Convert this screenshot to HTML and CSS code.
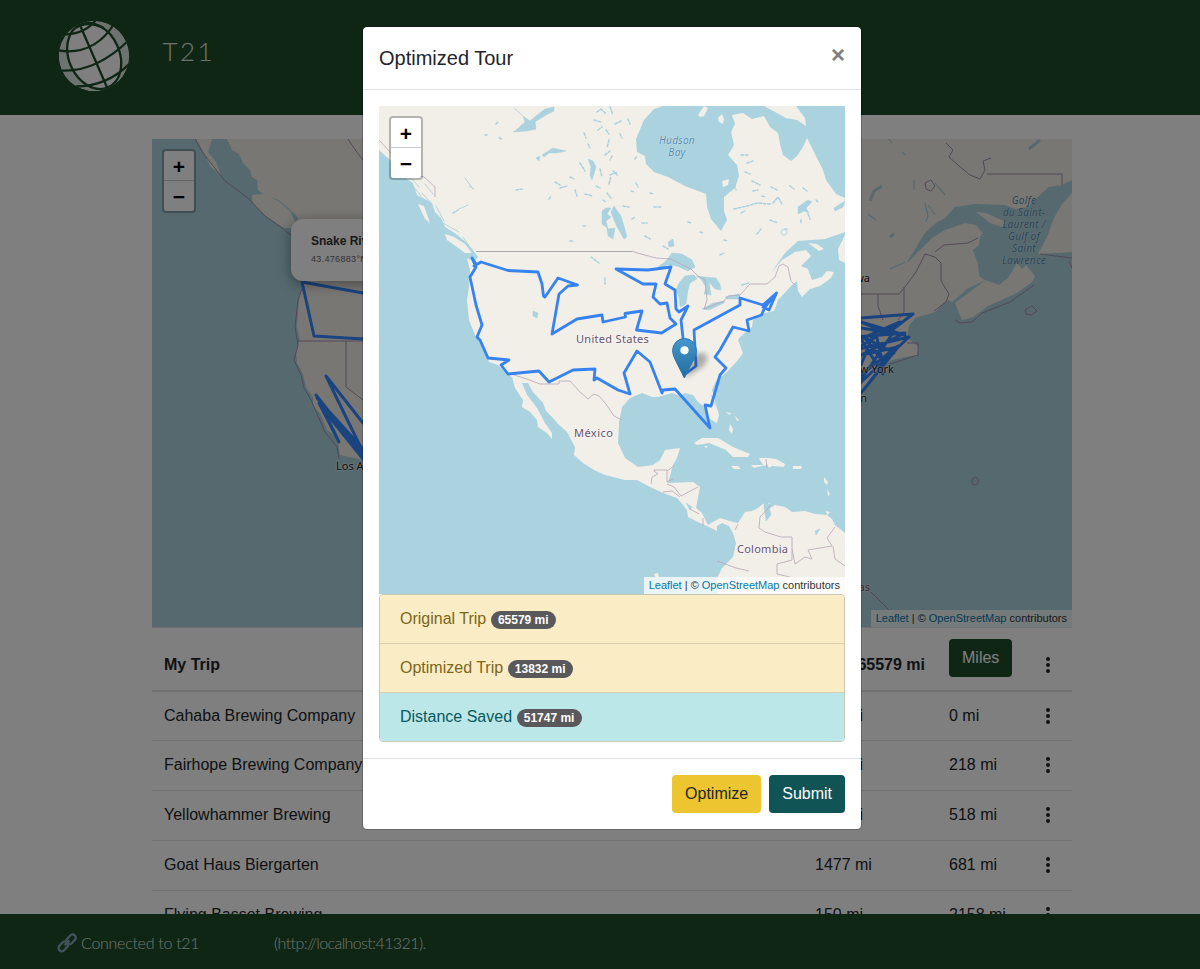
FILE: index.html
```html
<!DOCTYPE html>
<html lang="en">
<head>
<meta charset="utf-8">
<title>T21</title>
<link rel="stylesheet" href="styles.css">
</head>
<body>
<div class="page">
  <header class="header">
    <svg class="logo" viewBox="0 0 72 72">
      <defs><clipPath id="globe"><circle cx="36" cy="36" r="35.3"/></clipPath></defs>
      <g clip-path="url(#globe)">
        <circle cx="36" cy="36" r="35.3" fill="#dbe6dc"/>
        <g fill="none" stroke="#1e4d2b" stroke-width="2.3">
          <ellipse cx="36.2" cy="36" rx="25.3" ry="34.3" transform="rotate(-24 36.2 36)" fill="#fff"/>
          <path d="M21.500 4L49.300 68M0 30.500Q36 36 56 4M2 50.500Q38 53 72 19M18 66.500Q50 66 72 43M6 14.500Q28 14 38.500 -1M18 8Q28 0 46 8"/>
        </g>
      </g>
    </svg>
    <span class="brand">T21</span>
  </header>

  <main class="main">
    <div class="map main-map">
      <svg class="map-art" viewBox="152 139 920 488">
        <rect x="152" y="139" width="920" height="488" fill="#aad3df"/>
        <g fill="#f2efe9">
          <path d="M227 139L232 150L239 154L243 163L250 170L252 177L257 180L258 190L267 197L277 199L287 207L296 215L304 230L300 260L302 283L299 300L297 327L300 340L296 350L297 363L303 374L306 387L313 397L313 407L320 413L327 430L334 435L338 443L340 455L363 460L420 520L861 430L861 397L870 381L885 365L892 360L905 357L918 355L918 346L913 343L907 337L909 326L915 318L935 312L948 300L952 302L967 289L985 280L979 276L978 264L973 250L979 245L980 237L983 233L976 225L965 223L945 230L932 238L921 249L906 264L925 233L937 222L945 218L955 207L975 204L1005 205L1015 209L1028 207L1042 193L1049 187L1062 185L1072 180V139Z"/>
          <path d="M196 139H212L208 152L216 162L221 175L210 166L204 153Z"/>
          <path d="M252 195L264 194L278 201L290 211L298 228L284 228L266 216L253 204Z"/>
          <path d="M955 303L962 320L973 317L988 306L1017 293L1032 282L1035 276L1026 265L1022 269L1017 263L1008 278L999 285L985 280L979 285Z"/>
          <path d="M976 212L986 213L1006 222L1003 227L990 223Z"/>
          <path d="M1072 193L1062 204L1054 218L1047 237L1038 254L1072 252Z"/>
        </g>
        <path d="M870 201L874 191L882 186M1029 149L1040 140M890 237L894 234" fill="none" stroke="#aad3df" stroke-width="3"/>
        <path d="M892 143L888 138M905 155L902 152M925 203L928 216L926 222M914 180V190M935 215L928 205M945 195L935 183M876 220L868 214M890 269L905 262" fill="none" stroke="#aad3df" stroke-width="1.2"/>
        <g fill="none" stroke="#a78fac" stroke-width="1">
          <path d="M195 139L203 153L225 181L248 198L265 216L282 228L291 235M304 283L298 300L295 327L298 345L294 360L301 375L304 388L311 400L325 432L337 447L339 459M297 341H346V387L363 400M346 341H363M946 143L953 150L949 157L959 166L970 175L980 179L985 170L983 161L991 158M987 174H1062V185M861 294H899L905 287L916 272L925 254L935 257L941 263V281L949 294L946 302L934 311M878 294V306L883 320M904 287V312L898 320M935 252L944 245L968 243L978 238M955 320L960 323L972 322L982 313L1010 302L1034 285M907 343L918 343V355L890 364M871 592L889 610M348 139L356 151L363 160"/>
          <path d="M925 183L931 180L935 186L931 191L926 189ZM972 479L976 477L979 481L976 485L972 484ZM1025 310L1032 306L1037 311L1031 315L1026 314Z"/>
          <path d="M1072 258L1040 254M1072 268L1069 261"/>
        </g>
        <g fill="none" stroke="#3388ff" stroke-width="3" stroke-linejoin="round" stroke-linecap="round">
          <path d="M363 293L302 282L314 336L363 339M363 423L326 376L363 452M316 395L363 455L319 403L339 442L325 413M317 398L363 449L323 409L363 459"/>
          <path d="M861 318L913 314L888 333L861 322L905 335L861 328M855 337L905 333L861 355L898 347L861 393L898 346L861 375M861 365L875 330L882 360L865 338L894 353M861 346L900 322L861 339L883 374M855 350L909 337L856 387L893 333"/>
        </g>
      </svg>
      <div class="zoom-control"><span>+</span><span>−</span></div>
      <div class="popup"><b>Snake River Brewing</b><small>43.476883°N, 110.762°W</small></div>
      <span class="place water-label gulf">Golfe<br>du Saint-<br>Laurent /<br>Gulf of<br>Saint<br>Lawrence</span>
      <span class="place city la">Los Angeles</span>
      <span class="place city ottawa">Ottawa</span>
      <span class="place city ny">New York</span>
      <span class="place city wash">Washington</span>
      <span class="place city bahamas">Bahamas</span>
      <div class="attribution"><a>Leaflet</a> | © <a>OpenStreetMap</a> contributors</div>
    </div>

    <table class="trip">
      <thead>
        <tr><th class="name">My Trip</th><th class="leg">65579 mi</th><th class="total"><span class="btn miles">Miles</span></th><th class="menu"><svg viewBox="0 0 6 18"><path d="M3 3h.01M3 9h.01M3 15h.01"/></svg></th></tr>
      </thead>
      <tbody>
        <tr><td>Cahaba Brewing Company</td><td>218 mi</td><td>0 mi</td><td class="menu"><svg viewBox="0 0 6 18"><path d="M3 3h.01M3 9h.01M3 15h.01"/></svg></td></tr>
        <tr><td>Fairhope Brewing Company</td><td>300 mi</td><td>218 mi</td><td class="menu"><svg viewBox="0 0 6 18"><path d="M3 3h.01M3 9h.01M3 15h.01"/></svg></td></tr>
        <tr><td>Yellowhammer Brewing</td><td>163 mi</td><td>518 mi</td><td class="menu"><svg viewBox="0 0 6 18"><path d="M3 3h.01M3 9h.01M3 15h.01"/></svg></td></tr>
        <tr><td>Goat Haus Biergarten</td><td>1477 mi</td><td>681 mi</td><td class="menu"><svg viewBox="0 0 6 18"><path d="M3 3h.01M3 9h.01M3 15h.01"/></svg></td></tr>
        <tr><td>Flying Basset Brewing</td><td>150 mi</td><td>2158 mi</td><td class="menu"><svg viewBox="0 0 6 18"><path d="M3 3h.01M3 9h.01M3 15h.01"/></svg></td></tr>
      </tbody>
    </table>
  </main>

  <footer class="footer">
    <svg class="link-icon" viewBox="0 0 20 20"><g fill="none" stroke="#86a5b4" stroke-width="2.3"><rect x="8.5" y="3.2" width="11" height="6.4" rx="3.2" transform="rotate(-47 14 6.4)"/><rect x=".8" y="10.2" width="11" height="6.4" rx="3.2" transform="rotate(-47 6.3 13.4)"/><path d="M7.5 12.2L12.5 7.4"/></g></svg>
    <span class="connected">Connected to t21</span><span class="host">(http://localhost:41321).</span>
  </footer>
</div>

<div class="backdrop">
  <section class="modal">
    <div class="modal-header"><h5>Optimized Tour</h5><span class="close">×</span></div>
    <div class="modal-body">
      <div class="map tour-map">
        <svg class="map-art" viewBox="379 106 466 488">
          <rect x="379" y="106" width="466" height="488" fill="#aad3df"/>
          <g fill="#f2efe9">
            <path d="M379 106V150L390 160L401 170L407 179L413 183L417 195L425 199L432 203L435 212L441 218L445 227L456 234L467 243L473 250L478 257L474 262L467 258L470 270L469 287L467 300L469 320L475 335L485 350L489 362L498 365L505 372L512 377L515 388L523 400L522 407L530 412L537 420L538 427L547 433L552 439L552 433L545 423L537 408L527 395L522 383L528 383L533 392L543 403L546 411L553 418L558 424L567 432L575 447L574 455L583 463L594 470L605 475L625 480L637 480L650 487L663 493L677 498L683 505L687 510L688 517L700 523L709 527L717 531L717 526L722 523L729 526L733 533L736 543L733 557L722 568L717 578L718 594H845V533L840 529L835 525L832 519L827 515L815 514L805 511L792 512L785 507L775 505L770 508L763 509L770 503L764 503L758 508L752 511L745 512L738 523L733 522L720 518L708 525L702 513L696 508L700 487L693 482L668 483L673 465L677 458L680 448L665 450L660 460L653 465L638 467L625 458L618 443L619 423L622 407L630 398L642 393L652 397L658 397L672 393L680 396L685 393L693 395L698 402L705 407L708 418L717 423L719 415L712 390L716 381L728 371L738 360L743 353L738 340L740 337L752 327L753 320L765 313L774 311L778 300L792 285L797 281L798 291L802 297L810 289L820 286L831 278L834 272L827 271L822 277L812 280L808 269L801 266L811 256L806 250L795 252L782 260L771 273L785 253L798 241L825 239L845 232V198L836 194L826 180L823 170L816 156L807 138L803 147L797 156L791 161L783 155L780 144L778 133L770 127L764 116L752 119L743 113L732 115L735 124L731 132L734 145L728 155L737 165L739 176L735 188L724 197L724 211L727 220L721 231L711 219L707 207L706 194L685 186L668 177L654 172L646 164L645 156L637 152L636 139L644 120L654 109L663 106Z"/>
            <path d="M445 234L454 237L465 244L472 253L465 253L457 247L447 240Z"/>
            <path d="M418 204L424 206L430 223L425 219Z"/>
            <path d="M698 115L704 106L708 108L704 116L700 117Z"/>
            <path d="M718 118L722 114L724 119L723 124L719 122Z"/>
            <path d="M764 106H796L805 118L806 126L797 120L786 118Z"/>
            <path d="M722 181L729 179L728 185L723 187Z"/>
            <path d="M808 243L817 244L824 249L819 251ZM838 249L845 235V263L839 260Z"/>
            <path d="M694 443L702 438L718 438L733 447L750 454L748 457L733 457L726 450L709 443L697 445ZM704 446L708 446L706 448Z"/>
            <path d="M759 458L768 458L767 465L762 466L754 468L751 465L763 465L760 460ZM768 458L776 459L785 464L784 467L772 466L769 468L767 464ZM731 466L738 466L741 469L734 469ZM793 466L802 466L801 469L793 469Z"/>
            <path d="M730 424L733 429L732 434L729 430ZM725 412L731 413L730 415ZM735 416L739 420L737 421ZM824 477L828 482L827 485L824 482ZM827 489L830 494L828 496ZM826 511L830 512L827 515ZM654 574L658 573L659 578L655 577Z"/>
          </g>
          <g fill="#aad3df" stroke="#9fccd9" stroke-width=".4">
            <path d="M514 108L523 116L525 122L515 131L513 132L527 131L536 129L535 122L546 115L554 111L554 107L545 109L536 116L530 121L524 117Z"/>
            <path d="M542 155L553 148L557 149L566 151L557 153L549 153L544 157ZM536 158L540 156L539 161ZM588 159L593 161L596 167L592 180L590 175L591 167Z"/>
            <path d="M602 211L606 208L611 208L607 214L611 217L606 221L608 229L615 228L613 239L608 236L607 228L602 224ZM614 206L621 216L624 226L627 237L624 239L617 227L614 220L611 212Z"/>
            <path d="M658 267L666 261L672 253L682 254L692 260L695 267L688 271L677 266L667 265L660 269ZM679 283L685 276L694 275L697 279L690 283L688 290L686 304L680 307L679 297L676 290ZM696 276L705 277L716 278L720 284L721 290L715 289L709 282L711 295L704 294L706 287L701 279ZM702 309L713 303L725 301L724 303L709 310ZM725 297L739 294L741 299L727 299ZM668 242L673 239L674 246L669 247Z"/>
            <path d="M763 497L768 502L771 515L766 521ZM815 531L820 529L816 535ZM533 311L538 313L537 318L533 316ZM686 503L692 507L690 510ZM798 207L808 200L812 202L806 208L809 213L804 211L798 214ZM834 208L845 201L843 207L835 211Z"/>
          </g>
          <g fill="none" stroke="#a9d0dc" stroke-width="1.500" stroke-linecap="round" stroke-dasharray="2.500 1.800">
            <path d="M597 112l4-3 5 5M610 107l3 8M598 130l4-3M594 120l7 2M584 133l2 5M609 140l-2 8M605 155l5-4M580 163l5 8M600 169l2 8M555 182l5 3M560 188l7-2M575 190l2 6M549 199l2-3M585 194l8 2M607 193l4 5M610 175l8-3M609 184l2-8M615 124l6-3M628 119l2 5M613 171l4 4M636 183l2 4M631 191l4 1M623 206l6 1M516 190l6-1M499 138l3 1M485 135h2M496 124l3-3M453 213l5-3M583 226h3M570 241h3M591 257l8 6M605 278v6M632 219l3-2M642 223h5M645 236l5 3M654 207h8M663 246l5 3M741 155h7M747 163l6-2M752 181l8 4M734 209l13-3 10-3 14 1M773 203l5-6 4 7M741 213l4-2M757 234l4-5M770 220l8 3M785 229h2M808 214l2 5M801 220v3M771 187l6 3M753 191l5-1M734 186l2 4M720 255l4-2M742 285l7-2M809 133l3 3M785 138l3-3M635 159l2-3M606 130l3 4M620 134l2 4M588 144l2 4M612 156l-2 4M596 186l4 2M570 177l4 2M603 200l3 2M745 172l5 2M762 196l4 1M790 186l4 3M803 188l4 3M816 200l3 3M724 240l4 1M688 222l3 1M700 232l3 1M650 193l4 1"/>
          </g>
          <g fill="none" stroke="#b5d5dc" stroke-width="1" stroke-linecap="round">
            <path d="M465 178l8 11M469 186l5 3M459 209l9-4M409 181l12 15M413 180l6 7M403 175l9 5M422 193l10 11M425 184l8 10M436 206l8 15M443 223l16 9M463 237l9 13M750 332l5-4M741 338l2 9M711 395l8 16M782 230a3 3 0 1 0 4 0a3 3 0 0 0-4 0"/>
          </g>
          <g fill="none" stroke="#b7a4b5" stroke-width=".8">
            <path d="M379 140L391 153L408 173L424 177L435 187V197M632 251L637 253L656 258L671 259L691 269L698 276L705 280L707 300L704 309L724 301L728 296L740 295L750 284H767L775 277L779 266L783 264L788 267L791 281L795 285M514 375L527 379L540 384H559V381H570L580 392L588 399L594 394L599 396L606 404L614 416L622 420M651 484L652 477L658 474L654 471V470H667V482L673 479M667 484L674 487L681 496L698 487M667 471L674 466M663 492L672 491L680 497M690 509L699 514M703 518V526M735 530L738 524M771 505L760 517L759 528L765 532L781 537H792L792 560L777 564V574L790 577M792 549L795 564L805 557L812 559L808 550L832 546L827 538L835 527M717 561L736 568L749 571M833 546L835 559L845 566M766 459L767 467"/>
            <path d="M476 251.500H632" stroke="#aaa" stroke-width="1"/>
          </g>
          <path d="M472 258L476 264L474 266L481 262L508 270.500L538 272L542 284L543.500 296L545 297L558 278L577.500 285L568 286L559 294L552 334L577 319L602 315L603 322L625.500 317L625 313.500L642 311L636.500 330L661.500 333L676 324L670 318L667 303L660 304L653 297L656 284H643L616 269L648 270L671 267L665 284L675 290L676 309L679 312L688 306L681 320L683 338L684 375L696 366L694 330L740 305V298L763 305L776.500 293L769 310L763 307L776.500 293L765 307L761.500 315L753 318L747 320L749 331L733 327L720 350L715 357L726 368L720 375L711 406L705 405L710 428L675 389L663 390L662 393L650 362L637 351L624 373L630 394L618 390L597 378L594 380L595 369L573 370L549 382L539 371L508 374L501 365L509 360L488 358L480 340L477 337L482 325L476 305L470 277L476 267Z" fill="none" stroke="#3683f0" stroke-width="2.800" stroke-linejoin="round"/>
          <defs>
            <linearGradient id="pin" x2="0" y2="1"><stop stop-color="#4597cf"/><stop offset="1" stop-color="#216c9d"/></linearGradient>
            <filter id="soft"><feGaussianBlur stdDeviation="2.6"/></filter>
          </defs>
          <path d="M685 378L691 360Q697 350 706 354Q710 361 701 368Z" fill="#000" opacity=".28" filter="url(#soft)"/>
          <path d="M684.500 338.500A11.900 11.900 0 0 0 672.600 350.400C672.600 356 676 361 684.400 378C692.800 361 696.400 356 696.400 350.400A11.900 11.900 0 0 0 684.500 338.500Z" fill="url(#pin)" stroke="#2e78ad"/>
          <circle cx="684.500" cy="350.300" r="4.100" fill="#fff"/>
        </svg>
        <div class="zoom-control"><span>+</span><span>−</span></div>
        <span class="place water-label hudson">Hudson<br>Bay</span>
        <span class="place us">United States</span>
        <span class="place mexico">México</span>
        <span class="place colombia">Colombia</span>
        <div class="attribution"><a>Leaflet</a> | © <a>OpenStreetMap</a> contributors</div>
      </div>
      <ul class="summary">
        <li>Original Trip <span class="badge">65579 mi</span></li>
        <li>Optimized Trip <span class="badge">13832 mi</span></li>
        <li class="saved">Distance Saved <span class="badge">51747 mi</span></li>
      </ul>
    </div>
    <div class="modal-footer"><span class="btn optimize">Optimize</span><span class="btn submit">Submit</span></div>
  </section>
</div>
</body>
</html>
```
FILE: styles.css
```css
* { box-sizing: border-box; }
html, body { margin: 0; height: 969px; overflow: hidden; }
body {
  position: relative;
  font: 16px/24px "Liberation Sans", Arial, sans-serif;
  color: #212529;
  background: #fff;
}
.page { display: flex; flex-direction: column; height: 969px; overflow: hidden; }

.header {
  flex: none;
  display: flex;
  align-items: flex-start;
  height: 115px;
  padding: 19.5px 58px;
  background: #1e4d2b;
}
.logo { width: 72px; height: 72px; }
.brand {
  margin: 15px 0 0 32.5px;
  font: 300 26px/32px Lato, sans-serif;
  letter-spacing: 2.4px;
  color: #dbe6dc;
}

.main { flex: 1; min-height: 0; overflow: hidden; padding: 24px 0 0 152px; }
.map { position: relative; height: 488px; overflow: hidden; }
.main-map { width: 920px; }
.map-art { display: block; width: 100%; height: 100%; }
.zoom-control {
  position: absolute;
  left: 10px;
  top: 10px;
  width: 34px;
  height: 64px;
  border: 2px solid rgba(0, 0, 0, .25);
  border-radius: 4px;
  background: #fff;
  background-clip: padding-box;
}
.zoom-control span {
  display: block;
  height: 29px;
  font: bold 21px/32px "Liberation Sans", sans-serif;
  text-align: center;
  color: #000;
}
.zoom-control span + span { height: 31px; border-top: 1px solid #ccc; }
.attribution {
  position: absolute;
  right: 0;
  bottom: 0;
  padding: 0 5px;
  font-size: 11px;
  line-height: 17px;
  color: #333;
  white-space: nowrap;
  background: rgba(255, 255, 255, .75);
}
.attribution a { color: #0078a8; }
.popup {
  position: absolute;
  left: 139px;
  top: 80px;
  width: 230px;
  height: 62px;
  padding: 13px 20px;
  border-radius: 12px;
  background: #fff;
  box-shadow: 0 3px 14px rgba(0, 0, 0, .4);
  font-size: 12px;
  line-height: 18px;
  color: #333;
}
.popup b, .popup small { display: block; }
.popup small { font: 9px/18px "Liberation Sans", sans-serif; letter-spacing: .32px; color: #666; }

.place {
  position: absolute;
  font: 11px/13px "Noto Sans", sans-serif;
  letter-spacing: .3px;
  color: #66506c;
  white-space: nowrap;
  text-shadow: 0 0 2px #fff, 0 0 2px #fff;
}
.water-label {
  font-style: italic;
  font-size: 10px;
  line-height: 12px;
  text-align: center;
  color: #5288ae;
  text-shadow: 0 0 1px #fff;
}
.city { color: #222; letter-spacing: 0; }
.gulf { left: 847px; top: 55px; width: 50px; }
.la { left: 184px; top: 320px; }
.ottawa { right: 202px; top: 132px; }
.ny { right: 178px; top: 223px; }
.wash { right: 205px; top: 252px; }
.bahamas { right: 202px; top: 441px; color: #66506c; }
.hudson { left: 280px; top: 28px; }
.us { left: 197px; top: 226px; }
.mexico { left: 195px; top: 320px; letter-spacing: .45px; }
.colombia { left: 358px; top: 436px; letter-spacing: .25px; }

.trip { width: 920px; table-layout: fixed; border-collapse: separate; border-spacing: 0; }
.trip th, .trip td { height: 50px; padding: 12px; vertical-align: top; text-align: left; border-top: 1px solid #dee2e6; }
.trip th { height: 65px; padding-bottom: 0; border-bottom: 2px solid #dee2e6; }
.trip thead .name, .trip thead .leg { padding-top: 25px; }
.trip tbody tr:first-child td { height: 48px; border-top: 0; }
.trip .leg { width: 134px; text-align: right; }
.trip .total { width: 87px; padding-top: 11px; }
.trip .menu { width: 48px; padding: 15px 0 0 21px; }
.trip thead .menu { padding-top: 28px; }
.menu svg { display: block; width: 6px; height: 18px; }
.menu path { stroke: #212529; stroke-width: 4; stroke-linecap: round; }

.btn { display: inline-block; height: 38px; padding: 7px 13px; border-radius: 4px; font-weight: 400; white-space: nowrap; color: #fff; }
.miles { background: #1e4d2b; }
.optimize { background: #ecc530; color: #212529; }
.submit { background: #105456; }

.footer {
  flex: none;
  display: flex;
  align-items: center;
  height: 55px;
  padding: 2px 57px 0;
  background: #1e4d2b;
  font: 300 16px/24px Lato, sans-serif;
  color: #dbe6dc;
}
.link-icon { width: 20px; height: 20px; margin-right: 4px; }
.connected { width: 193px; letter-spacing: -.28px; }
.host { letter-spacing: -.59px; }

.backdrop { position: absolute; inset: 0; background: rgba(0, 0, 0, .5); }
.modal {
  width: 500px;
  margin: 26px 0 0 362px;
  border: 1px solid rgba(0, 0, 0, .2);
  border-radius: 5px;
  background: #fff;
  background-clip: padding-box;
}
.modal-header { display: flex; justify-content: space-between; height: 63px; padding: 16px; border-bottom: 1px solid #dee2e6; }
.modal-header h5 { margin: 0; font-weight: 400; font-size: 20px; line-height: 30px; }
.close { font-weight: 700; font-size: 24px; line-height: 24px; color: #7f7f7f; }
.modal-body { padding: 16px; }
.summary { list-style: none; margin: 0; padding: 0; border: 1px solid #c5c8b4; border-radius: 4px; overflow: hidden; }
.summary li { height: 49px; padding: 12px 20px; background: #faedc5; border-bottom: 1px solid #d8cfae; color: #7b6619; }
.summary .saved { height: 48px; border: 0; background: #bce7e9; color: #08595b; }
.badge {
  display: inline-block;
  padding: 3px 7.2px;
  border-radius: 10px;
  background: #59595b;
  color: #fff;
  font-weight: 700;
  font-size: 12px;
  line-height: 12px;
  vertical-align: baseline;
}
.modal-footer { display: flex; justify-content: flex-end; gap: 8px; height: 71px; padding: 16px; border-top: 1px solid #dee2e6; }
```
